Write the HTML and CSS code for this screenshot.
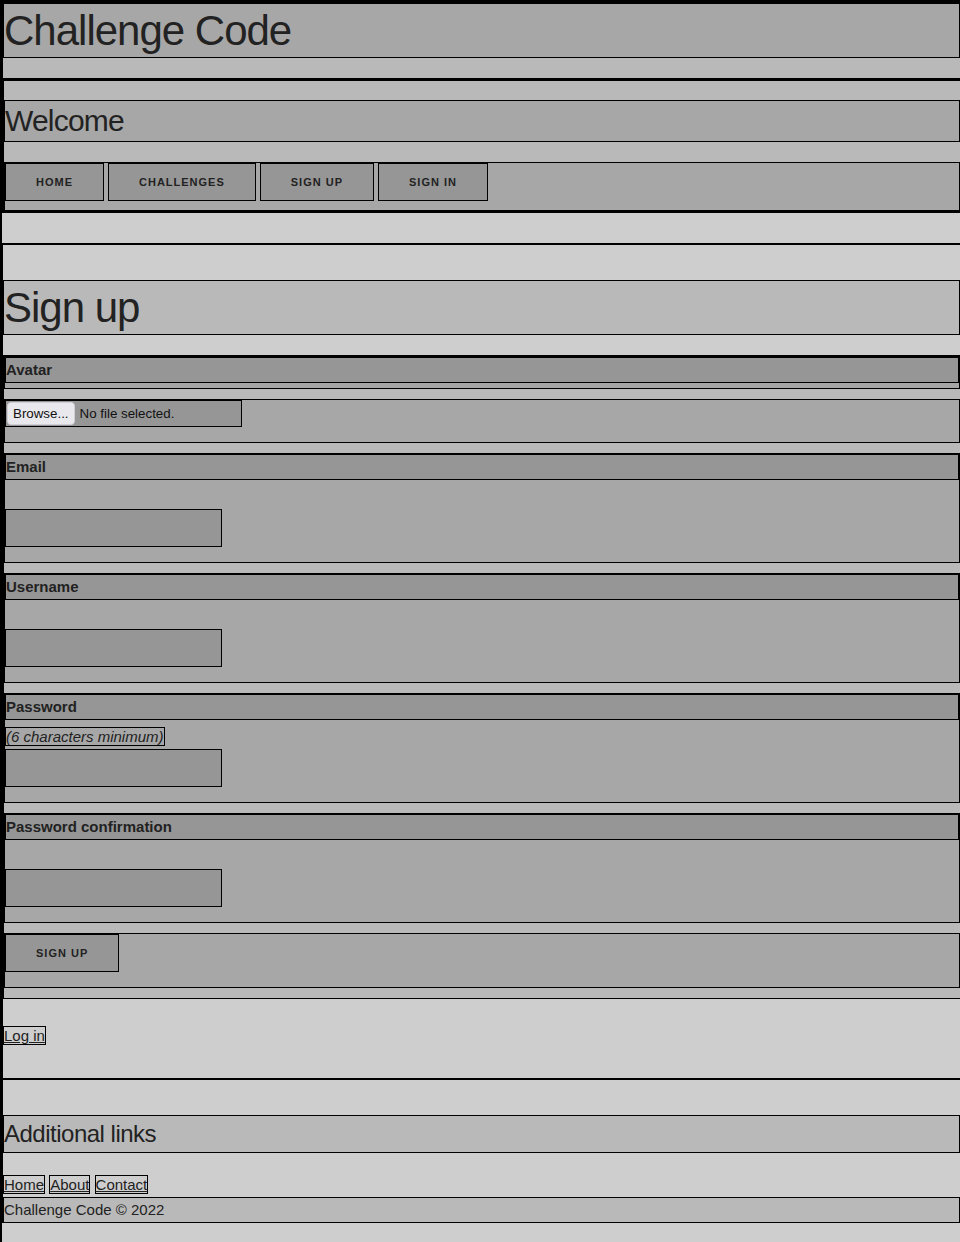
FILE: index.html
```html
<!DOCTYPE html>
<html lang="en">
<head>
<meta charset="utf-8">
<title>Sign up · Challenge Code</title>
<link rel="stylesheet" href="styles.css">
</head>
<body>
<header class="site-header">
  <h1 class="site-title">Challenge Code</h1>
</header>

<section class="welcome">
  <div class="container">
    <h4 class="welcome-title">Welcome</h4>
    <nav class="main-nav">
      <a class="button" href="#">Home</a>
      <a class="button" href="#">Challenges</a>
      <a class="button" href="#">Sign up</a>
      <a class="button" href="#">Sign in</a>
    </nav>
  </div>
</section>

<main class="content">
  <h2 class="page-title">Sign up</h2>
  <form class="signup-form" action="#">
    <div class="field">
      <label class="field-label" for="avatar">Avatar</label>
    </div>
    <div class="field">
      <div class="file-input" id="avatar"><span class="file-button">Browse...</span><span class="file-name">No file selected.</span></div>
    </div>
    <div class="field">
      <label class="field-label" for="email">Email</label><br>
      <input class="text-input" type="email" id="email">
    </div>
    <div class="field">
      <label class="field-label" for="username">Username</label><br>
      <input class="text-input" type="text" id="username">
    </div>
    <div class="field">
      <label class="field-label" for="password">Password</label>
      <em class="hint">(6 characters minimum)</em><br>
      <input class="text-input" type="password" id="password">
    </div>
    <div class="field">
      <label class="field-label" for="password_confirmation">Password confirmation</label><br>
      <input class="text-input" type="password" id="password_confirmation">
    </div>
    <div class="actions">
      <button class="button submit-button" type="submit">Sign up</button>
    </div>
  </form>
  <a class="text-link" href="#">Log in</a>
</main>

<footer class="site-footer">
  <h5 class="footer-title">Additional links</h5>
  <div class="footer-links">
    <a class="text-link" href="#">Home</a>
    <a class="text-link" href="#">About</a>
    <a class="text-link" href="#">Contact</a>
  </div>
  <p class="copyright">Challenge Code © 2022</p>
</footer>
</body>
</html>
```

FILE: styles.css
```css
* {
  box-sizing: border-box;
}

html {
  background: #cecece;
}

body {
  margin: 0;
  border-top: 2px solid #000;
  border-left: 2px solid #000;
  background: #cecece;
  color: #222;
  font-family: "Liberation Sans", Arial, sans-serif;
  font-size: 15px;
  line-height: 24px;
}

h1, h2, h4, h5, p {
  margin: 0;
  font-weight: 400;
}

/* header */
.site-header {
  border: 1px solid #000;
  border-right: 0;
  background: #b9b9b9;
}

.site-title {
  border: 1px solid #000;
  background: #a7a7a7;
  font-size: 42px;
  line-height: 53px;
  letter-spacing: -1px;
  margin-bottom: 20px;
}

/* welcome section */
.welcome {
  border: 1px solid #000;
  border-right: 0;
  background: #b9b9b9;
  margin-bottom: 30px;
}

.welcome .container {
  border: 1px solid #000;
  border-right: 0;
  padding-top: 19px;
}

.welcome-title {
  border: 1px solid #000;
  background: #a7a7a7;
  font-size: 30px;
  line-height: 40px;
  letter-spacing: -0.8px;
  margin-bottom: 20px;
}

.main-nav {
  display: flex;
  align-items: flex-start;
  gap: 4px;
  border: 1px solid #000;
  background: #a7a7a7;
}

.button {
  display: block;
  height: 38px;
  margin: 0 0 9px;
  padding: 0 30px;
  border: 1px solid #000;
  border-radius: 0;
  background: #969696;
  color: #222;
  font-family: "Liberation Sans", Arial, sans-serif;
  font-size: 11px;
  font-weight: 700;
  line-height: 36px;
  letter-spacing: 1px;
  text-transform: uppercase;
  text-decoration: none;
  white-space: nowrap;
  cursor: pointer;
}

/* main */
.content {
  border: 1px solid #000;
  border-top-width: 2px;
  border-right: 0;
  padding: 35px 0 30px;
}

.page-title {
  border: 1px solid #000;
  background: #b9b9b9;
  font-size: 42px;
  line-height: 53px;
  letter-spacing: -1px;
  margin-bottom: 20px;
}

.signup-form {
  border: 1px solid #000;
  border-right: 0;
  background: #b9b9b9;
  margin: 0 0 25px;
}

.field {
  border: 1px solid #000;
  background: #a7a7a7;
  margin-bottom: 10px;
}

.field-label {
  display: block;
  border: 1px solid #000;
  background: #969696;
  font-weight: 700;
  margin-bottom: 5px;
}

.hint {
  border: 1px solid #000;
  font-style: italic;
}

.text-input {
  display: block;
  width: 217px;
  height: 38px;
  margin: 0 0 15px;
  padding: 6px 10px;
  border: 1px solid #000;
  border-radius: 0;
  background: #969696;
  color: #222;
  font-family: "Liberation Sans", Arial, sans-serif;
  font-size: 15px;
  outline: none;
}

.file-input {
  display: flex;
  align-items: center;
  width: 237px;
  height: 27px;
  margin-bottom: 15px;
  padding: 1px;
  border: 1px solid #000;
  background: #969696;
  color: #111;
  font-size: 13.333px;
  line-height: 21px;
}

.file-button {
  height: 23px;
  padding: 0 5px;
  border: 1px solid #cfcfd6;
  border-radius: 4px;
  background: #e9e9ed;
}

.file-name {
  margin-left: 5px;
}

.actions {
  display: flex;
  align-items: flex-start;
  border: 1px solid #000;
  background: #a7a7a7;
  margin-bottom: 10px;
}

.submit-button {
  margin-bottom: 15px;
}

.text-link {
  color: #222;
  text-decoration: underline;
  border: 1px solid #000;
}

/* footer */
.site-footer {
  border: 1px solid #000;
  border-right: 0;
  border-bottom: 0;
  padding-top: 35px;
}

.footer-title {
  border: 1px solid #000;
  background: #b9b9b9;
  font-size: 24px;
  line-height: 36px;
  letter-spacing: -0.5px;
  margin-bottom: 20px;
}

.copyright {
  border: 1px solid #000;
  background: #b9b9b9;
  margin-bottom: 20px;
}
```
